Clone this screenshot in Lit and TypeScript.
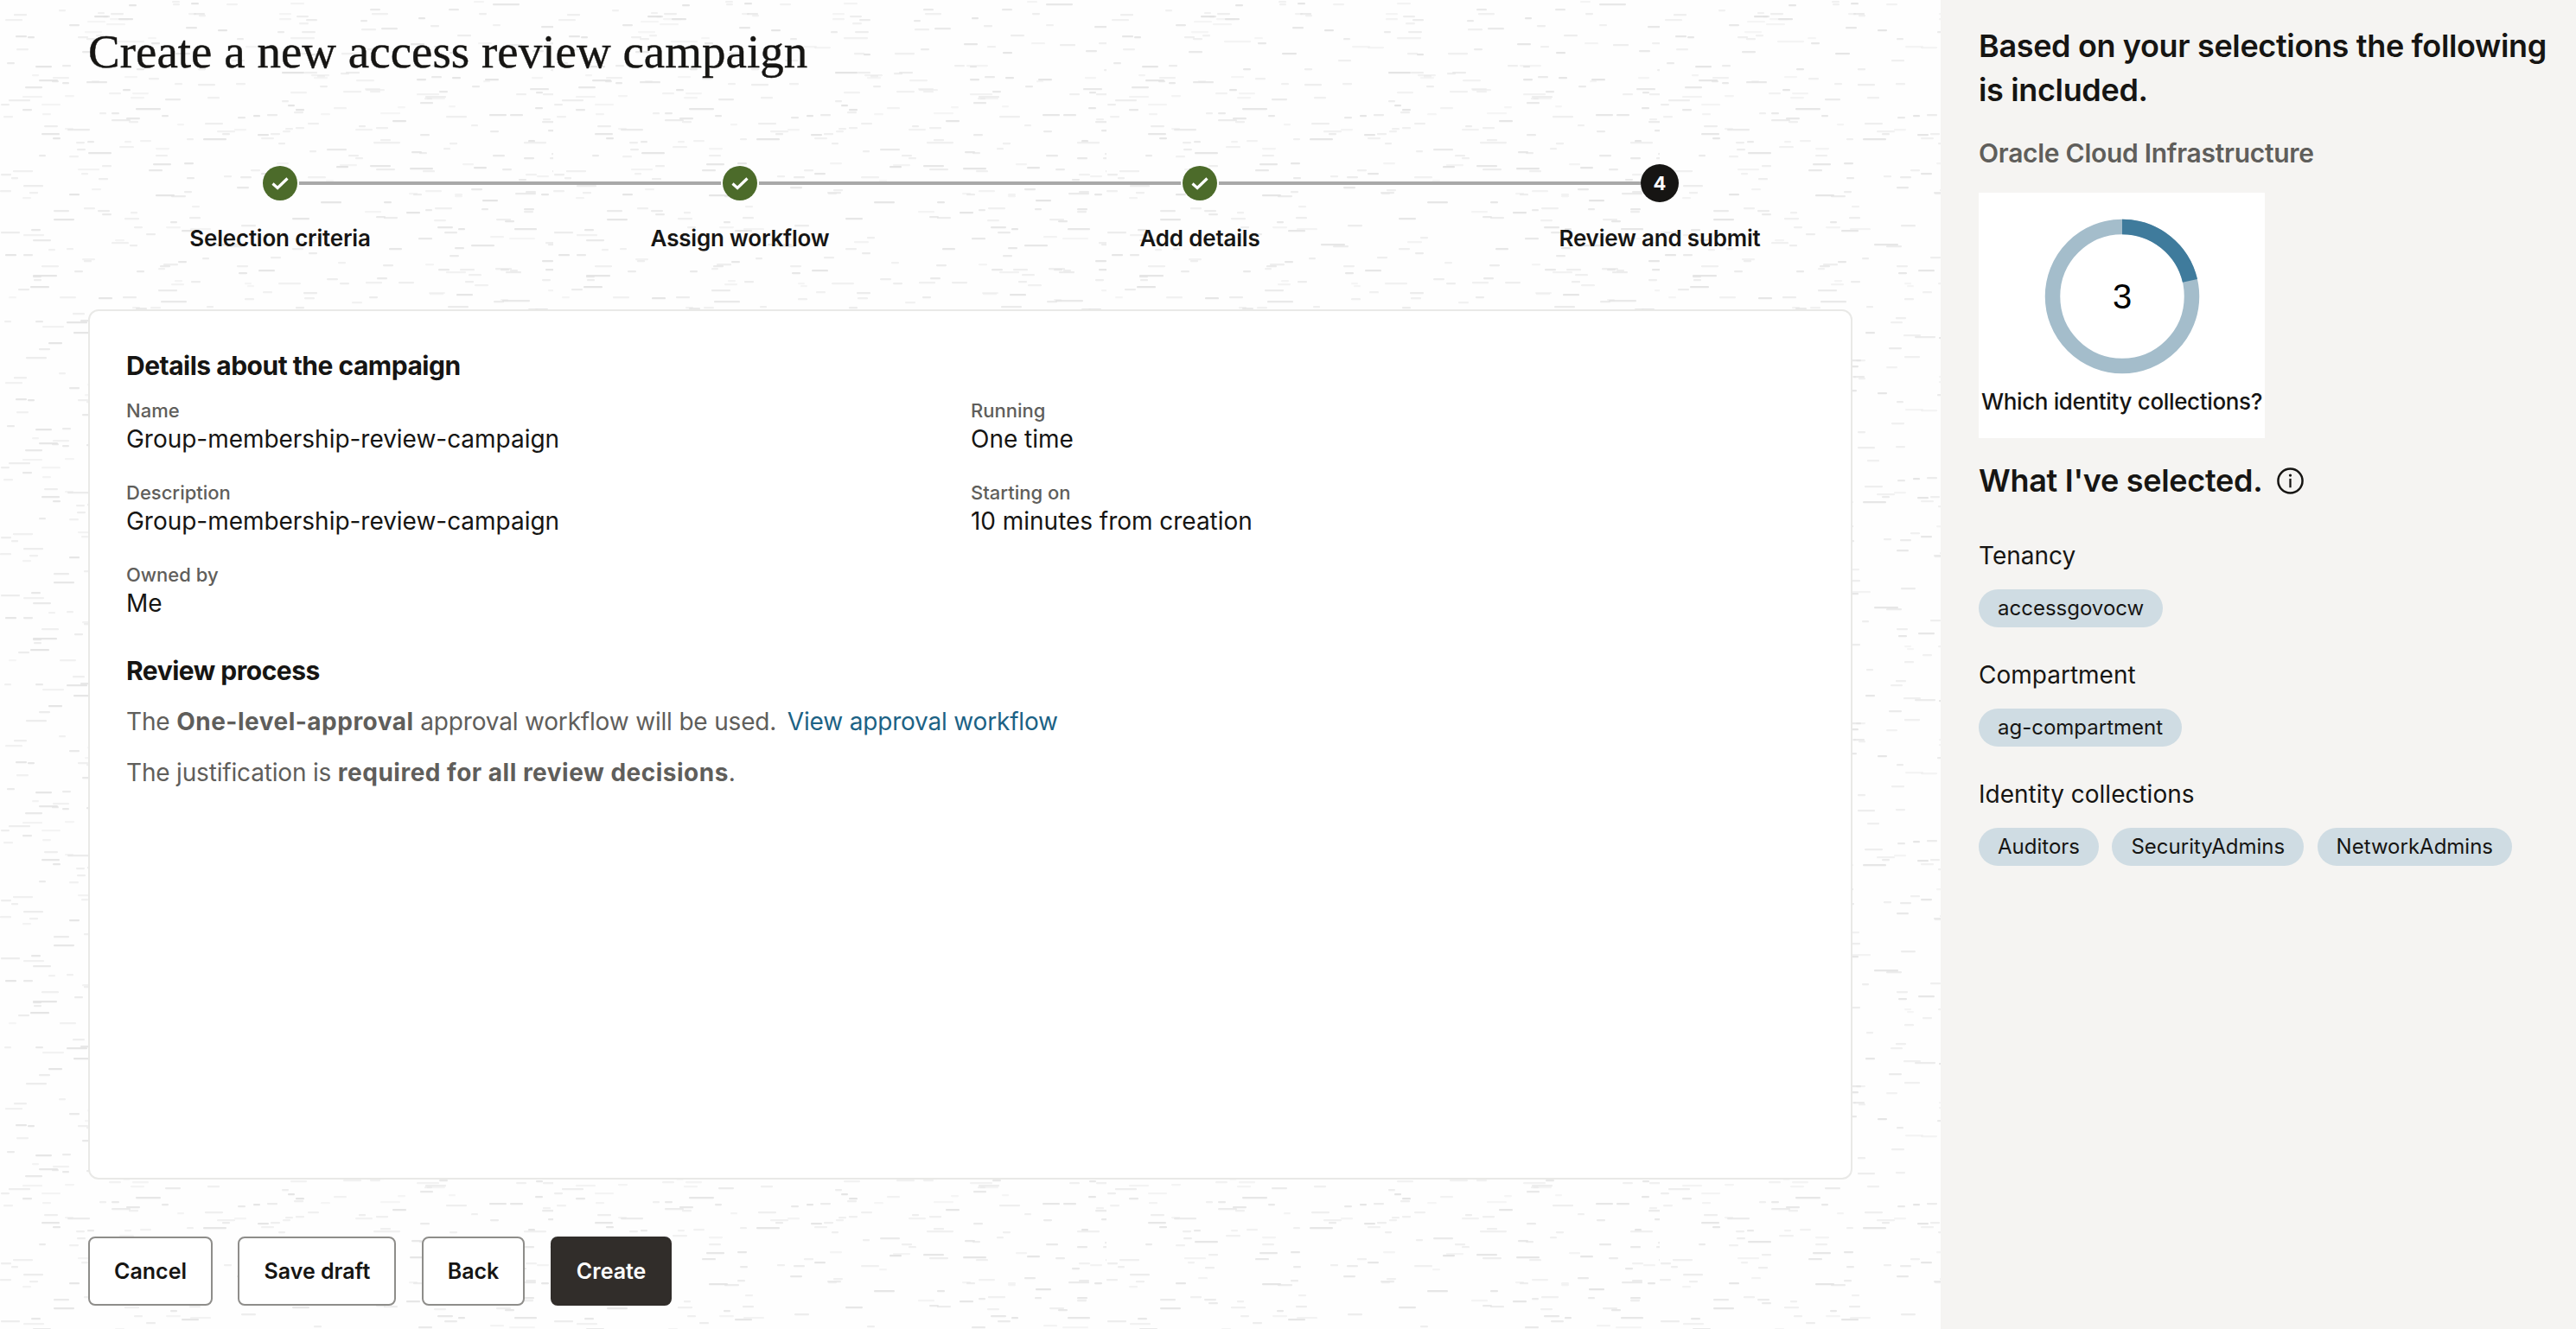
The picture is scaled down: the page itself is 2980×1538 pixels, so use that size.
import { LitElement, html, css, svg } from "lit";
import { customElement } from "lit/decorators.js";

function texture(): string {
  let seed = 42;
  const r = () => ((seed = (seed * 16807) % 2147483647) / 2147483647);
  const W = 640, H = 420;
  let s = "";
  for (let i = 0; i < 480; i++) {
    const x = Math.round(r() * W), y = Math.round(r() * H);
    const len = 8 + Math.round(r() * r() * 26);
    const o = (0.3 + r() * 0.6).toFixed(2);
    s += `<rect x='${x}' y='${y}' width='${len}' height='2.2' rx='1' fill='%23e2e2e2' opacity='${o}'/>`;
  }
  return `url("data:image/svg+xml,<svg xmlns='http://www.w3.org/2000/svg' width='${W}' height='${H}'><filter id='b'><feGaussianBlur stdDeviation='0.7'/></filter><g filter='url(%23b)'>${s}</g></svg>")`;
}

const steps = [
  { label: "Selection criteria", done: true },
  { label: "Assign workflow", done: true },
  { label: "Add details", done: true },
  { label: "Review and submit", done: false, n: "4" },
];

const fields = [
  ["Name", "Group-membership-review-campaign"],
  ["Running", "One time"],
  ["Description", "Group-membership-review-campaign"],
  ["Starting on", "10 minutes from creation"],
  ["Owned by", "Me"],
];

const groups = [
  { label: "Tenancy", pills: ["accessgovocw"] },
  { label: "Compartment", pills: ["ag-compartment"] },
  { label: "Identity collections", pills: ["Auditors", "SecurityAdmins", "NetworkAdmins"] },
];

function arc(cx: number, cy: number, r: number, a0: number, a1: number) {
  const p = (a: number) => [cx + r * Math.sin((a * Math.PI) / 180), cy - r * Math.cos((a * Math.PI) / 180)];
  const [x0, y0] = p(a0), [x1, y1] = p(a1);
  return `M${x0} ${y0}A${r} ${r} 0 ${a1 - a0 > 180 ? 1 : 0} 1 ${x1} ${y1}`;
}

@customElement("app-root")
export class AppRoot extends LitElement {
  static styles = css`
    :host {
      display: flex;
      width: 100%;
      height: 100vh;
      min-height: 1538px;
      overflow: hidden;
      font-family: Inter, "Liberation Sans", sans-serif;
      color: #161513;
      background: #fff;
    }
    .main {
      width: 2245px;
      flex: none;
      display: flex;
      flex-direction: column;
      box-sizing: border-box;
      background-color: #fefefe;
    }
    h1 {
      margin: 28px 0 0 102px;
      font: 400 55px/64px "Liberation Serif", serif;
      -webkit-text-stroke: 0.4px #161513;
      color: #161513;
      white-space: nowrap;
    }
    .steps {
      display: grid;
      grid-template-columns: repeat(4, 532px);
      margin: 98px 0 0 58px;
    }
    .step { display: flex; flex-direction: column; align-items: center; }
    .track { display: flex; align-items: center; width: 100%; height: 44px; }
    .line { flex: 1; height: 4px; background: #a9a9a9; }
    .line.none { background: transparent; }
    .dot {
      flex: none;
      width: 40px;
      height: 40px;
      margin: 0 2px;
      border-radius: 50%;
      background: #4c6b2a;
      display: flex;
      align-items: center;
      justify-content: center;
    }
    .dot.cur {
      width: 44px;
      height: 44px;
      margin: 0;
      background: #161513;
      color: #fff;
      font-size: 22px;
      font-weight: 700;
    }
    .step-label { margin-top: 26px; font-size: 26px; line-height: 32px; font-weight: 600; white-space: nowrap; letter-spacing: -0.2px; }
    .card {
      flex: 1;
      margin: 66px 102px 0 102px;
      padding: 45px 42px 0;
      background: #fff;
      border: 2px solid #e9e9e7;
      border-radius: 12px;
      box-sizing: border-box;
      min-height: 0;
    }
    h2 { margin: 0; font-size: 30px; line-height: 36px; font-weight: 700; letter-spacing: -0.5px; }
    .grid { display: grid; grid-template-columns: 977px 1fr; row-gap: 31px; margin-top: 20px; }
    .f-label { font-size: 22px; line-height: 28px; font-weight: 500; color: #5f5e5b; }
    .f-value { font-size: 28px; line-height: 36px; padding-top: 1px; margin-bottom: -1px; letter-spacing: -0.03px; }
    .review { margin-top: 43px; }
    p { margin: 19px 0 0; font-size: 28px; line-height: 40px; color: #5f5e5b; letter-spacing: -0.18px; }
    p.first { margin-top: 21px; }
    p b { font-weight: 700; letter-spacing: 0.5px; }
    a { color: #1c6285; text-decoration: none; margin-left: 5px; }
    .actions { display: flex; gap: 29.5px; margin: 66px 0 27px 102px; }
    .btn {
      height: 80px;
      padding: 0 28px;
      box-sizing: border-box;
      border: 2px solid #8e8d8a;
      border-radius: 8px;
      background: #fff;
      color: #161513;
      font: 600 25px Inter, "Liberation Sans", sans-serif;
    }
    .btn.primary { background: #312d2a; border-color: #312d2a; color: #fff; }
    .side {
      flex: 1;
      background: #f5f4f2;
      padding: 28px 20px 0 44px;
    }
    .side h3 { margin: 0; font-size: 36px; line-height: 51px; font-weight: 600; letter-spacing: -0.35px; }
    .org { margin-top: 29px; font-size: 30px; line-height: 36px; font-weight: 600; color: #5f5e5b; letter-spacing: -0.28px; }
    .box {
      width: 331px;
      height: 284px;
      margin-top: 28px;
      padding-top: 30px;
      box-sizing: border-box;
      background: #fff;
      display: flex;
      flex-direction: column;
      align-items: center;
    }
    .box svg { display: block; }
    .num { font: 400 40px "Liberation Sans", sans-serif; fill: #000; }
    .box-label { margin-top: 16px; font-size: 26px; line-height: 32px; font-weight: 500; white-space: nowrap; letter-spacing: -0.35px; }
    .sel { display: flex; align-items: center; gap: 17px; margin-top: 26px; font-size: 36px; line-height: 46px; font-weight: 600; letter-spacing: -0.3px; }
    .g-label { font-size: 28px; line-height: 36px; margin-top: 37px; }
    .g-label.first { margin-top: 46px; }
    .pills { display: flex; gap: 15.5px; margin-top: 21px; }
    .pill {
      height: 44px;
      padding: 0 22px;
      border-radius: 22px;
      background: #cfdce3;
      font-size: 24px;
      line-height: 44px;
      white-space: nowrap;
    }
  `;

  render() {
    return html`
      <div class="main" style="background-image:${texture()}">
        <h1>Create a new access review campaign</h1>
        <div class="steps">
          ${steps.map(
            (s, i) => html`<div class="step">
              <div class="track">
                <div class="line ${i === 0 ? "none" : ""}"></div>
                ${s.done
                  ? html`<div class="dot"><svg width="24" height="24" viewBox="0 0 24 24"><path d="M3.5 12.5l5.6 5L20.5 6.5" fill="none" stroke="#fff" stroke-width="3.2"/></svg></div>`
                  : html`<div class="dot cur">${s.n}</div>`}
                <div class="line ${i === 3 ? "none" : ""}"></div>
              </div>
              <div class="step-label">${s.label}</div>
            </div>`
          )}
        </div>
        <div class="card">
          <h2>Details about the campaign</h2>
          <div class="grid">
            ${fields.map(
              ([l, v]) => html`<div><div class="f-label">${l}</div><div class="f-value">${v}</div></div>`
            )}
          </div>
          <h2 class="review">Review process</h2>
          <p class="first">The <b>One-level-approval</b> approval workflow will be used. <a>View approval workflow</a></p>
          <p>The justification is <b>required for all review decisions</b>.</p>
        </div>
        <div class="actions">
          <button class="btn">Cancel</button>
          <button class="btn">Save draft</button>
          <button class="btn">Back</button>
          <button class="btn primary">Create</button>
        </div>
      </div>
      <div class="side">
        <h3>Based on your selections the following is included.</h3>
        <div class="org">Oracle Cloud Infrastructure</div>
        <div class="box">
          <svg width="180" height="180" viewBox="0 0 180 180">
            <circle cx="90" cy="90" r="80.5" fill="none" stroke="#a4bdcb" stroke-width="17.5"/>
            ${svg`<path d=${arc(90, 90, 80.5, 0, 77)} fill="none" stroke="#3f7b9c" stroke-width="17.5"/>`}
            <text class="num" x="90" y="104" text-anchor="middle">3</text>
          </svg>
          <div class="box-label">Which identity collections?</div>
        </div>
        <div class="sel">
          What I've selected.
          <svg width="31" height="31" viewBox="0 0 30 30">
            <circle cx="15" cy="15" r="13.6" fill="none" stroke="#161513" stroke-width="2.4"/>
            <rect x="13.9" y="12.5" width="2.2" height="10" fill="#161513"/>
            <circle cx="15" cy="8.8" r="1.6" fill="#161513"/>
          </svg>
        </div>
        ${groups.map(
          (g, i) => html`<div class="g-label ${i === 0 ? "first" : ""}">${g.label}</div>
            <div class="pills">${g.pills.map((p) => html`<div class="pill">${p}</div>`)}</div>`
        )}
      </div>
    `;
  }
}
